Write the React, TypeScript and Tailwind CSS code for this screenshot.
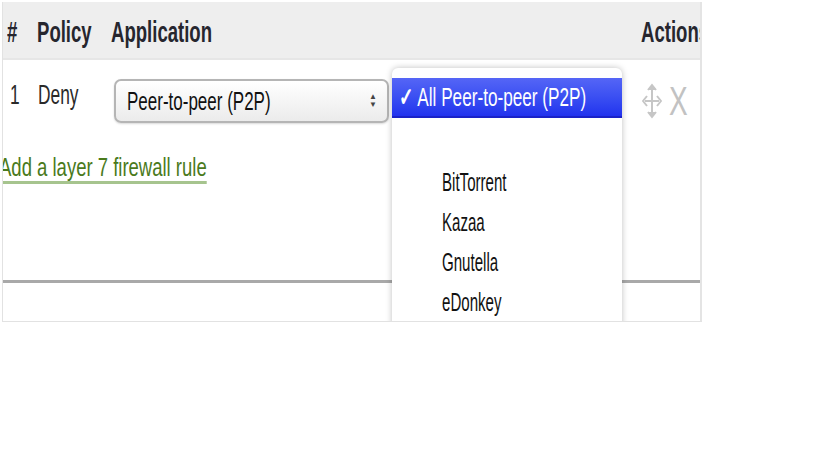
import React from 'react'

const sans = { fontFamily: '"Liberation Sans", Arial, sans-serif' }

// the reference is squeezed sideways, so texts are drawn at full height and narrowed
function Sq({ children, className = '' }: { children: React.ReactNode; className?: string }) {
  return <span className={`inline-block origin-left whitespace-nowrap ${className}`}>{children}</span>
}

function MoveIcon() {
  return (
    <svg width="20" height="38" viewBox="0 0 20 38" fill="none" stroke="#c6c6c6" strokeWidth="2">
      <path d="M10 3v32M3 19h14" />
      <path d="M6 8l4-5 4 5M6 30l4 5 4-5" fill="#c6c6c6" />
      <path d="M5 14l-4 5 4 5M15 14l4 5-4 5" />
    </svg>
  )
}

export default function App() {
  const options = ['BitTorrent', 'Kazaa', 'Gnutella', 'eDonkey', 'Napster']

  return (
    <div className="w-[819px] h-[460px] bg-white overflow-hidden" style={sans}>
      <div className="relative ml-[2px] mt-[2px] w-[700px] h-[320px] border-l border-b border-[#e2e2e2] overflow-hidden">
        {/* Header */}
        <div className="h-[58px] bg-[#eeeeee] border-b-2 border-[#e6e6e6] flex items-center pt-[5px] text-[29px] font-bold text-[#26262e] leading-none">
          <div className="ml-[4px] w-[30px]"><Sq className="scale-x-[0.64]">#</Sq></div>
          <div className="w-[74px]"><Sq className="scale-x-[0.64]">Policy</Sq></div>
          <div className="flex-1"><Sq className="scale-x-[0.64]">Application</Sq></div>
          <div className="w-[61px]"><Sq className="scale-x-[0.64]">Actions</Sq></div>
        </div>

        {/* Row */}
        <div className="flex items-start h-[82px] text-[28px] text-[#2a2a2a] leading-none">
          <div className="ml-[7px] mt-[21px] w-[28px]"><Sq className="scale-x-[0.62]">1</Sq></div>
          <div className="mt-[21px] w-[76px]"><Sq className="scale-x-[0.62]">Deny</Sq></div>
          <div className="mt-[19px] w-[275px] h-[44px] rounded-[7px] border-2 border-[#b5b5b5] bg-gradient-to-b from-white to-[#ebebeb] flex items-center justify-between pl-[11px] pr-[11px] text-[25px] text-[#111] shadow-[0_1px_2px_rgba(0,0,0,0.15)]">
            <Sq className="scale-x-[0.68]">Peer-to-peer (P2P)</Sq>
            <span className="flex flex-col items-center leading-none text-[8px] text-[#444] -mr-[1px]">
              <span>▲</span>
              <span>▼</span>
            </span>
          </div>
          <div className="ml-auto mr-[13px] mt-[21px] flex items-center gap-[7px]">
            <MoveIcon />
            <div className="w-[20px]"><Sq className="scale-x-[0.7] text-[40px] text-[#c2c2c2]">X</Sq></div>
          </div>
        </div>

        <div className="mt-[13px] -ml-[4px]">
          <a href="#" className="inline-block origin-left scale-x-[0.74] whitespace-nowrap text-[25px] leading-none text-[#4a7a1c] underline decoration-[#a6c48e] decoration-[3px] underline-offset-[5px]">
            Add a layer 7 firewall rule
          </a>
        </div>

        <div className="absolute left-0 right-[2px] top-[278px] h-[3px] bg-[#a9a9a9]" />
        <div className="absolute right-0 top-0 bottom-0 w-[2px] bg-[#e4e4e4]" />

        {/* Dropdown */}
        <div className="absolute left-[389px] top-[66px] w-[230px] h-[270px] bg-white rounded-t-[6px] shadow-[0_0_6px_rgba(0,0,0,0.25)] pt-[10px] leading-none">
          <div className="h-[40px] bg-gradient-to-b from-[#5565f6] to-[#2232ee] border-b-2 border-[#1a22c8] flex items-center pl-[7px] text-[26px] text-white">
            <Sq className="scale-x-[0.66]"><span className="font-bold">✓</span> All Peer-to-peer (P2P)</Sq>
          </div>
          <div className="h-[44px]" />
          {options.map((o) => (
            <div key={o} className="h-[40px] flex items-center pl-[50px] text-[26px] text-[#111]">
              <Sq className="scale-x-[0.58]">{o}</Sq>
            </div>
          ))}
        </div>
      </div>
    </div>
  )
}
